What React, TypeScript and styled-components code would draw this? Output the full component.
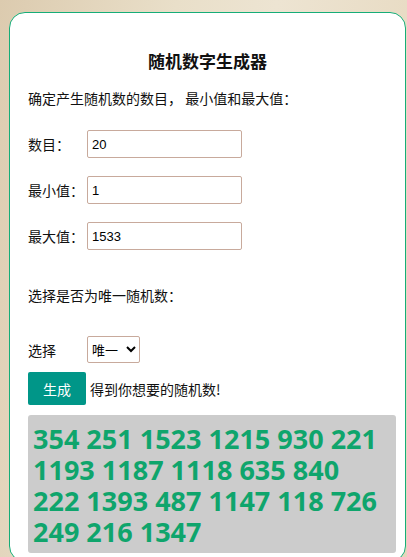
import React, { useState } from 'react'
import styled, { createGlobalStyle } from 'styled-components'

const GlobalStyle = createGlobalStyle`
  html, body {
    margin: 0;
    padding: 0;
    height: 100%;
    overflow: hidden;
  }
  body {
    background: linear-gradient(100deg, #dccbaf 0%, #e9dfc9 35%, #ede4d2 55%, #e5d6bb 100%);
    font-family: "Noto Sans CJK SC", "Noto Sans", sans-serif;
    color: #111;
  }
`

const numbers = [
  354, 251, 1523, 1215, 930, 221, 1193, 1187, 1118, 635, 840, 222, 1393, 487,
  1147, 118, 726, 249, 216, 1347,
]

const App = () => {
  const [count, setCount] = useState('20')
  const [min, setMin] = useState('1')
  const [max, setMax] = useState('1533')

  return (
    <>
      <GlobalStyle />
      <Card>
        <Title>随机数字生成器</Title>
        <Intro>确定产生随机数的数目， 最小值和最大值：</Intro>
        <Row>
          <Label>数目：</Label>
          <Input value={count} onChange={(e) => setCount(e.target.value)} />
        </Row>
        <Row>
          <Label>最小值：</Label>
          <Input value={min} onChange={(e) => setMin(e.target.value)} />
        </Row>
        <Row>
          <Label>最大值：</Label>
          <Input value={max} onChange={(e) => setMax(e.target.value)} />
        </Row>
        <Question>选择是否为唯一随机数：</Question>
        <SelectRow>
          <Label>选择</Label>
          <Select defaultValue="unique">
            <option value="unique">唯一</option>
            <option value="repeat">重复</option>
          </Select>
        </SelectRow>
        <ActionRow>
          <Button>生成</Button>
          <Hint>得到你想要的随机数!</Hint>
        </ActionRow>
        <Result>{numbers.join(' ')}</Result>
      </Card>
    </>
  )
}

const Card = styled.div`
  box-sizing: border-box;
  width: 397px;
  margin: 12px 0 0 9px;
  padding: 0 18px 8px 18px;
  background: #fff;
  border: 1px solid #16ad78;
  border-radius: 16px;
`

const Title = styled.h2`
  margin: 37px 0 0;
  font-size: 17px;
  font-weight: bold;
  line-height: 22px;
  text-align: center;
`

const Intro = styled.div`
  margin-top: 16px;
  font-size: 14px;
  line-height: 20px;
`

const Row = styled.div`
  display: flex;
  align-items: center;
  margin-top: 22px;
  & + & {
    margin-top: 18px;
  }
`

const Label = styled.span`
  width: 59px;
  flex-shrink: 0;
  font-size: 14px;
`

const Input = styled.input`
  box-sizing: border-box;
  width: 155px;
  height: 28px;
  padding: 0 4px;
  border: 1px solid #c8aa9c;
  border-radius: 2px;
  font-family: "Liberation Sans", Arial, sans-serif;
  font-size: 13px;
  color: #000;
  outline: none;
`

const Question = styled.div`
  margin-top: 35px;
  font-size: 14px;
  line-height: 20px;
`

const SelectRow = styled.div`
  display: flex;
  align-items: center;
  margin-top: 31px;
`

const Select = styled.select`
  box-sizing: border-box;
  width: 53px;
  height: 27px;
  border: 1px solid #c8aa9c;
  border-radius: 2px;
  background: #fff;
  font-family: "Noto Sans CJK SC", sans-serif;
  font-size: 13px;
  color: #000;
`

const ActionRow = styled.div`
  display: flex;
  align-items: center;
  margin-top: 9px;
`

const Button = styled.button`
  width: 58px;
  height: 33px;
  border: none;
  border-radius: 2px;
  background: #009688;
  color: #fff;
  font-family: "Noto Sans CJK SC", sans-serif;
  font-size: 14px;
  cursor: pointer;
`

const Hint = styled.span`
  margin-left: 4px;
  font-size: 14px;
`

const Result = styled.div`
  margin: 10px -9px 0 0;
  padding: 8px 12px 6px 5px;
  min-height: 124px;
  background: #cccccc;
  border-radius: 3px;
  color: #0fa56c;
  font-family: "Noto Sans", "Open Sans", sans-serif;
  font-weight: bold;
  font-size: 27px;
  line-height: 31px;
`

export default App
